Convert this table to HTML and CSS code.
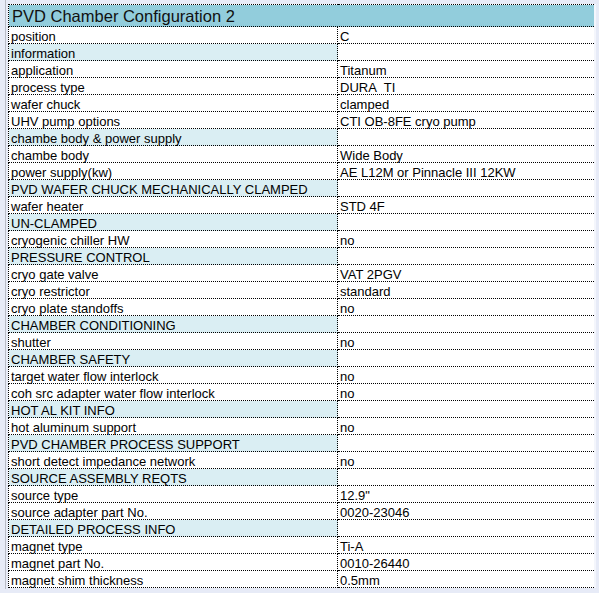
FILE: index.html
```html
<!DOCTYPE html>
<html lang="en">

<head>
    <meta charset="UTF-8">
    <meta name="viewport" content="width=device-width, initial-scale=1.0">
    <title>PVD Chamber Configuration 2</title>
    <link rel="stylesheet" href="styles.css">
</head>

<body>
    <div class="sheet">
        <table class="config">
            <tr class="title">
                <td colspan="2">PVD Chamber Configuration 2</td>
            </tr>
            <tr><td>position</td><td>C</td></tr>
            <tr class="section"><td>information</td><td></td></tr>
            <tr><td>application</td><td>Titanum</td></tr>
            <tr><td>process type</td><td>DURA&nbsp; TI</td></tr>
            <tr><td>wafer chuck</td><td>clamped</td></tr>
            <tr><td>UHV pump options</td><td>CTI OB-8FE cryo pump</td></tr>
            <tr class="section"><td>chambe body &amp; power supply</td><td></td></tr>
            <tr><td>chambe body</td><td>Wide Body</td></tr>
            <tr><td>power supply(kw)</td><td>AE L12M or Pinnacle III 12KW</td></tr>
            <tr class="section"><td>PVD WAFER CHUCK MECHANICALLY CLAMPED</td><td></td></tr>
            <tr><td>wafer heater</td><td>STD 4F</td></tr>
            <tr class="section"><td>UN-CLAMPED</td><td></td></tr>
            <tr><td>cryogenic chiller HW</td><td>no</td></tr>
            <tr class="section"><td>PRESSURE CONTROL</td><td></td></tr>
            <tr><td>cryo gate valve</td><td>VAT 2PGV</td></tr>
            <tr><td>cryo restrictor</td><td>standard</td></tr>
            <tr><td>cryo plate standoffs</td><td>no</td></tr>
            <tr class="section"><td>CHAMBER CONDITIONING</td><td></td></tr>
            <tr><td>shutter</td><td>no</td></tr>
            <tr class="section"><td>CHAMBER SAFETY</td><td></td></tr>
            <tr><td>target water flow interlock</td><td>no</td></tr>
            <tr><td>coh src adapter water flow interlock</td><td>no</td></tr>
            <tr class="section"><td>HOT AL KIT INFO</td><td></td></tr>
            <tr><td>hot aluminum support</td><td>no</td></tr>
            <tr class="section"><td>PVD CHAMBER PROCESS SUPPORT</td><td></td></tr>
            <tr><td>short detect impedance network</td><td>no</td></tr>
            <tr class="section"><td>SOURCE ASSEMBLY REQTS</td><td></td></tr>
            <tr><td>source type</td><td>12.9"</td></tr>
            <tr><td>source adapter part No.</td><td>0020-23046</td></tr>
            <tr class="section"><td>DETAILED PROCESS INFO</td><td></td></tr>
            <tr><td>magnet type</td><td>Ti-A</td></tr>
            <tr><td>magnet part No.</td><td>0010-26440</td></tr>
            <tr><td>magnet shim thickness</td><td>0.5mm</td></tr>
        </table>
    </div>
</body>

</html>
```

FILE: styles.css
```css
body {
    margin: 0;
    background-color: #e7ebf7;
    font-family: 'Liberation Sans', Arial, sans-serif;
    color: #000;
}

.sheet {
    margin-left: 5px;
    padding: 4px 0 0 2px;
    border-left: 1px solid #b9bcc6;
    height: 589px;
    box-sizing: border-box;
}

.config {
    border-collapse: collapse;
    width: 588px;
    background: #fff;
    border-right: 2px solid #f4f6fc;
}

.config td {
    border: 1px dotted #000;
    height: 16px;
    padding: 0 3px 0 2px;
    font-size: 13px;
    line-height: 13px;
    white-space: nowrap;
    vertical-align: bottom;
}

.config td:first-child {
    width: 323px;
}

.config .title td {
    height: 21px;
    background-color: #92cddc;
    font-size: 16.5px;
    line-height: 19px;
    padding-left: 3px;
    color: #111;
}

.config .section td:first-child {
    background-color: #daeef3;
}
```
